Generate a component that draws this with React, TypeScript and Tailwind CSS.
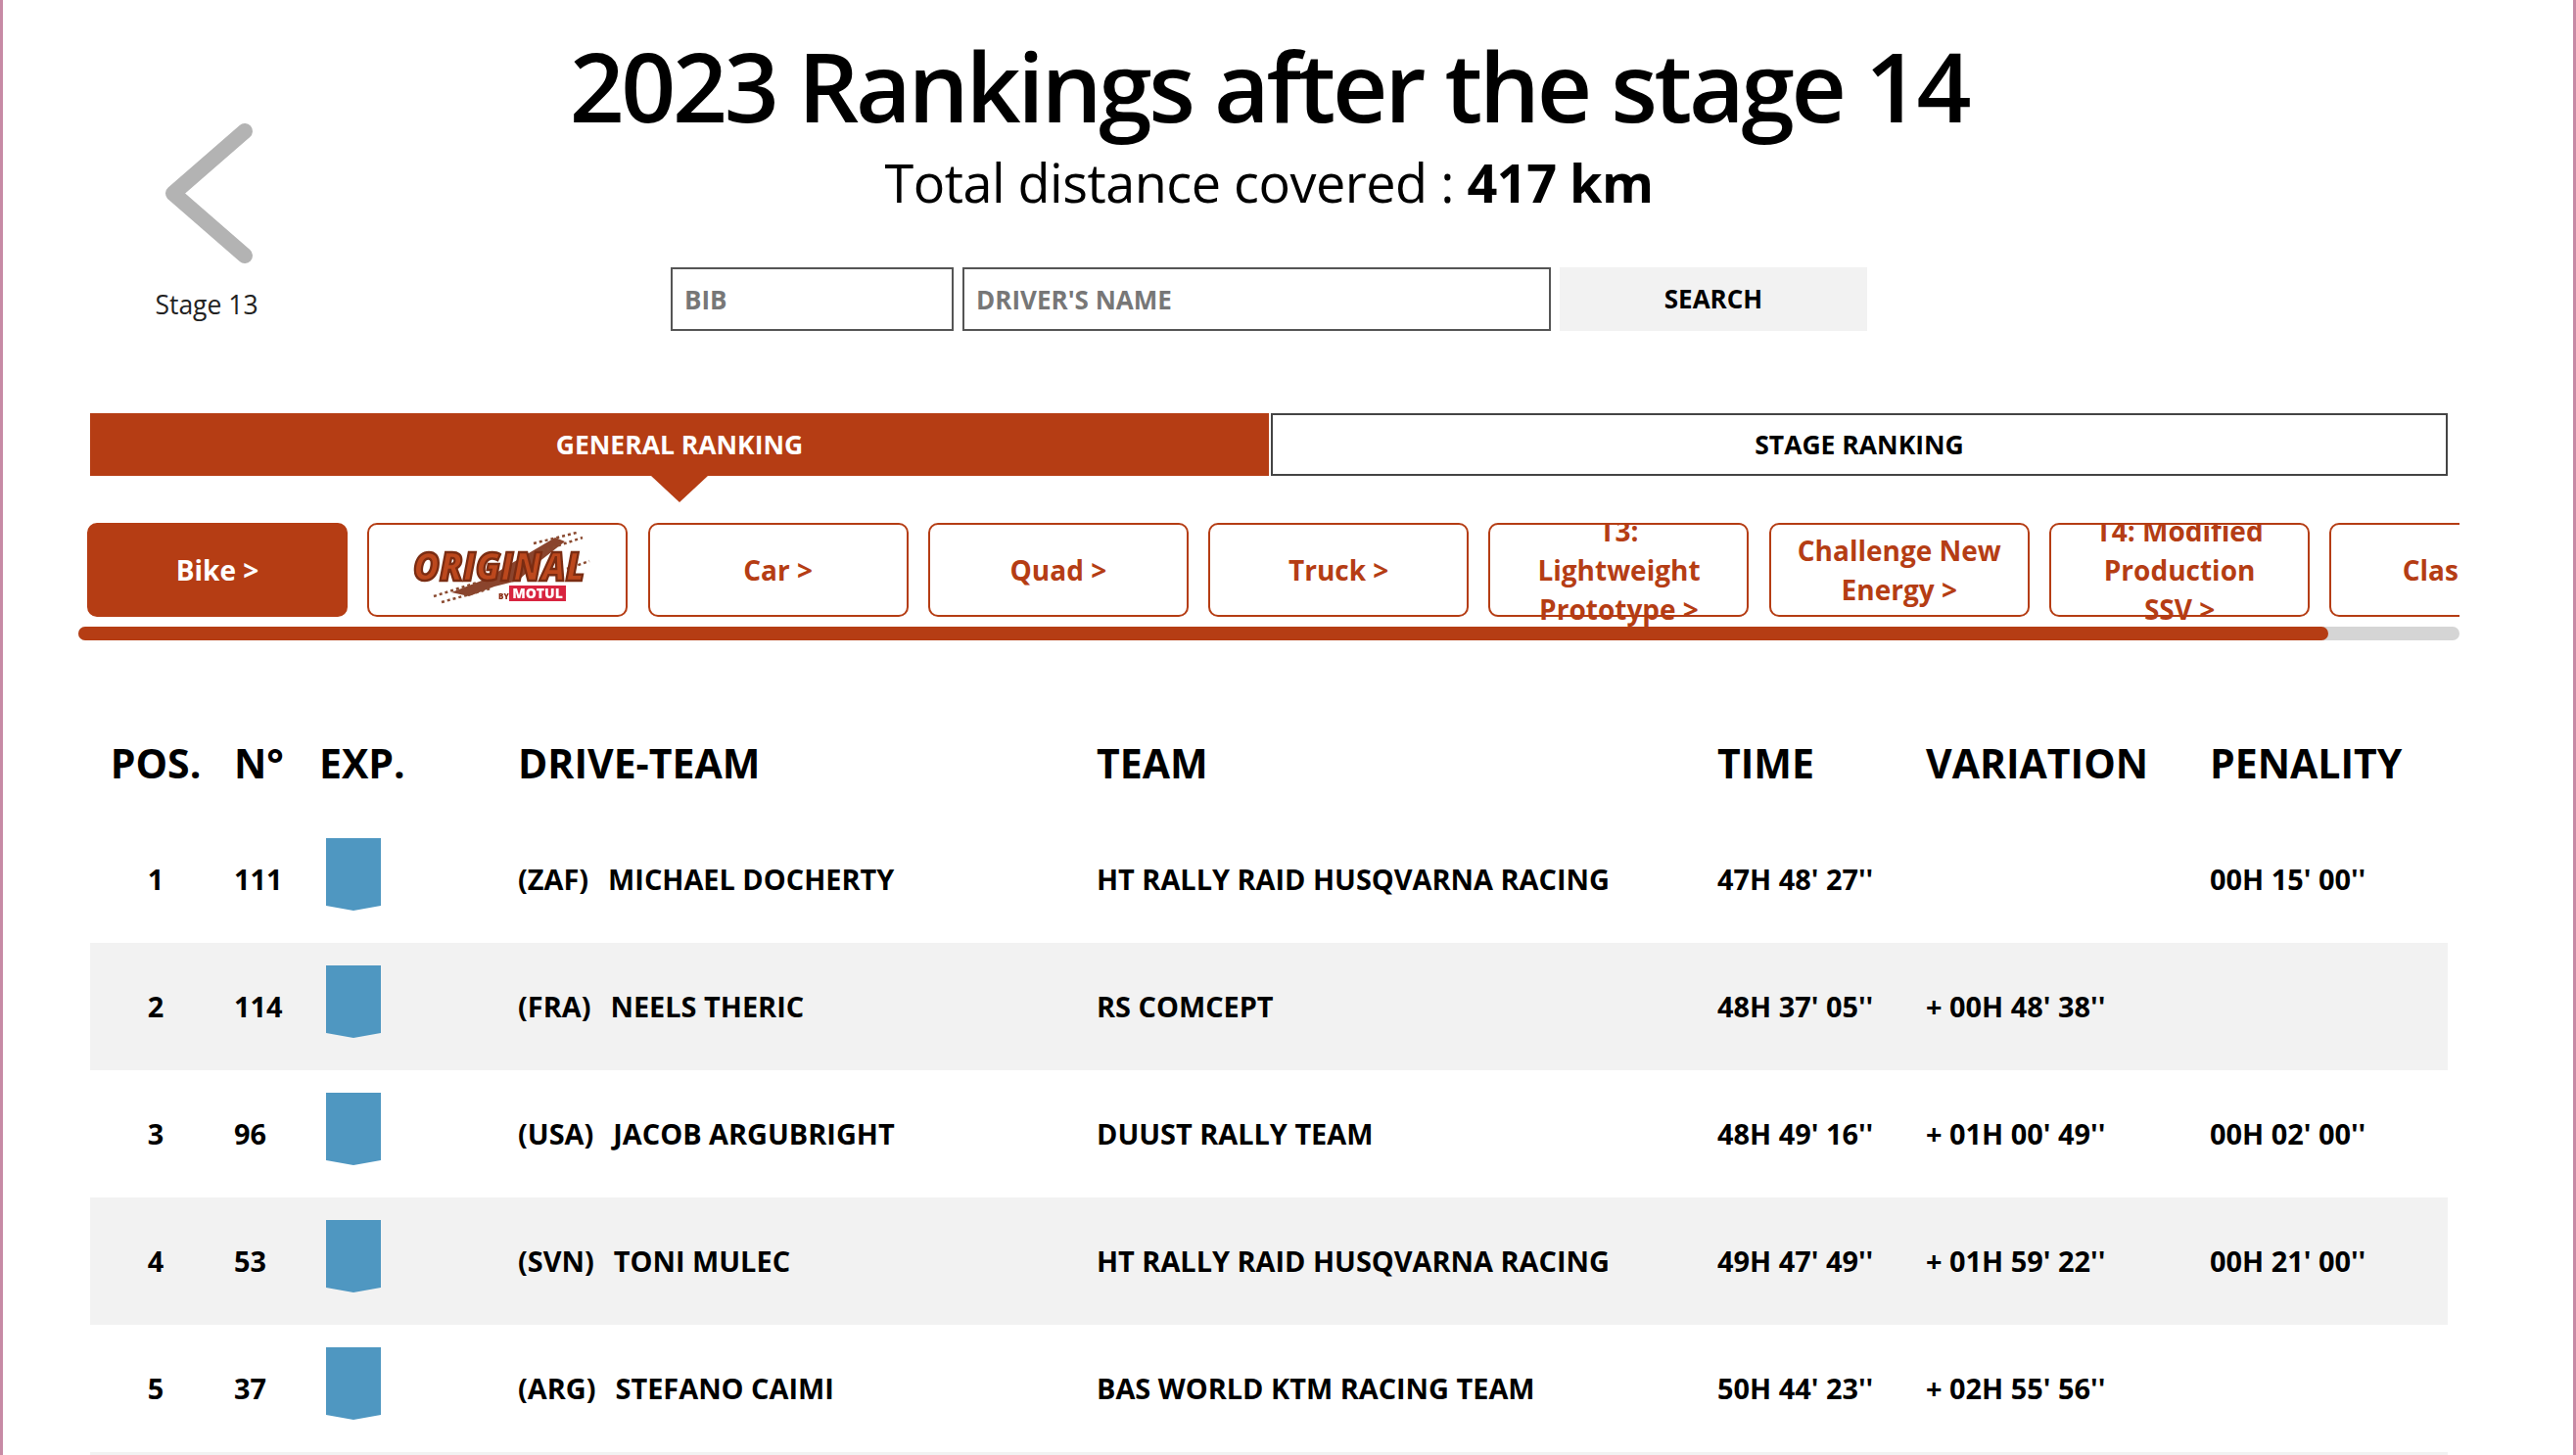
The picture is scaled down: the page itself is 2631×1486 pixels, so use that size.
const categories = [
  { label: 'Bike >', active: true },
  { label: 'logo' },
  { label: 'Car >' },
  { label: 'Quad >' },
  { label: 'Truck >' },
  { label: 'T3: Lightweight Prototype >' },
  { label: 'Challenge New Energy >' },
  { label: 'T4: Modified Production SSV\u00a0>' },
  { label: 'Classic >' },
];

const rows = [
  { pos: 1, bib: 111, country: '(ZAF)', driver: 'MICHAEL DOCHERTY', team: 'HT RALLY RAID HUSQVARNA RACING', time: "47H 48' 27''", variation: '', penalty: "00H 15' 00''" },
  { pos: 2, bib: 114, country: '(FRA)', driver: 'NEELS THERIC', team: 'RS COMCEPT', time: "48H 37' 05''", variation: "+ 00H 48' 38''", penalty: '' },
  { pos: 3, bib: 96, country: '(USA)', driver: 'JACOB ARGUBRIGHT', team: 'DUUST RALLY TEAM', time: "48H 49' 16''", variation: "+ 01H 00' 49''", penalty: "00H 02' 00''" },
  { pos: 4, bib: 53, country: '(SVN)', driver: 'TONI MULEC', team: 'HT RALLY RAID HUSQVARNA RACING', time: "49H 47' 49''", variation: "+ 01H 59' 22''", penalty: "00H 21' 00''" },
  { pos: 5, bib: 37, country: '(ARG)', driver: 'STEFANO CAIMI', team: 'BAS WORLD KTM RACING TEAM', time: "50H 44' 23''", variation: "+ 02H 55' 56''", penalty: '' },
];

function OriginalLogo() {
  return (
    <svg viewBox="0 0 190 78" className="w-[190px] h-[78px] shrink-0 blur-[0.6px]">
      <path d="M48 62 L84 48 L110 32 L154 6 L164 10 L136 32 L116 50 L92 56 L66 66 Z" fill="#7d3016" opacity="0.9" />
      <path d="M132 12 L176 1 M140 20 L182 6 M30 66 L74 52 M38 72 L88 58 M166 38 L189 30" stroke="#8a4a30" strokeWidth="2.5" strokeDasharray="3 3" fill="none" />
      <text x="9" y="50" fontFamily="'Open Sans', sans-serif" fontWeight="800" fontSize="40" fontStyle="italic" textLength="175" lengthAdjust="spacingAndGlyphs" fill="#bc481d" stroke="#7a2c12" strokeWidth="2.5">ORIGINAL</text>
      <rect x="107" y="55" width="58" height="16" fill="#d8243f" />
      <text x="136" y="68" textAnchor="middle" fontFamily="'Open Sans', sans-serif" fontWeight="800" fontSize="14" fill="#ffffff">MOTUL</text>
      <text x="96" y="69" fontFamily="'Open Sans', sans-serif" fontWeight="800" fontSize="8" fill="#8a2a12">BY</text>
    </svg>
  );
}

function Flag() {
  return (
    <svg viewBox="0 0 56 74" className="w-14 h-[74px] block">
      <path d="M0 0 H56 V69 L28 74 L0 69 Z" fill="#4f97c1" />
    </svg>
  );
}

export default function App() {
  return (
    <div className="h-[1486px] overflow-hidden bg-white border-x-[3px] border-[#c78aa5] font-['Open_Sans',sans-serif] text-black">
      <div className="pl-[89px] pr-[128px]">
        <header className="flex items-start pt-[32px]">
          <a className="w-[238px] shrink-0 flex flex-col items-center pt-[94px] text-[26.5px] text-[#222]">
            <svg viewBox="0 0 100 143" className="w-[100px] h-[143px]">
              <path d="M89 8 L16 71.5 L89 135" fill="none" stroke="#b3b3b3" strokeWidth="16" strokeLinecap="round" strokeLinejoin="round" />
            </svg>
            <span className="mt-[24px] leading-9">Stage 13</span>
          </a>
          <div className="flex-1 flex flex-col items-center">
            <h1 className="text-[98px] leading-[110px] font-semibold tracking-[-3.3px] whitespace-nowrap">2023 Rankings after the stage 14</h1>
            <p className="mt-[9px] text-[54px] leading-[70px] tracking-[-0.5px] whitespace-nowrap">
              Total distance covered : <span className="font-bold">417 km</span>
            </p>
            <form className="mt-[52px] flex gap-[9px]">
              <input placeholder="BIB" className="w-[289px] h-[65px] border-2 border-[#555] px-3 text-[26px] font-bold placeholder:text-[#777]" />
              <input placeholder="DRIVER'S NAME" className="w-[601px] h-[65px] border-2 border-[#555] px-3 text-[26px] font-bold placeholder:text-[#777]" />
              <button type="button" className="w-[314px] h-[65px] bg-[#f2f2f2] text-[26px] font-bold">SEARCH</button>
            </form>
          </div>
          <div className="w-[238px] shrink-0" />
        </header>

        <div className="mt-[84px] flex gap-[2px] relative">
          <button className="w-[1204px] h-[64px] pt-px bg-[#b53d14] text-white text-[26.5px] font-bold relative">
            GENERAL RANKING
            <span className="absolute left-1/2 -translate-x-1/2 top-full border-x-[29px] border-t-[27px] border-x-transparent border-t-[#b53d14]" />
          </button>
          <button className="flex-1 h-[64px] pt-px border-2 border-[#444] text-[26.5px] font-bold">STAGE RANKING</button>
        </div>

        <div className="-mx-3 mt-[48px]">
          <div className="overflow-hidden h-[106px]">
            <div className="flex gap-[20.3px] pl-[9px] w-max">
              {categories.map((c) => (
                <div
                  key={c.label}
                  className={`w-[266px] h-[96px] shrink-0 rounded-[10px] border-2 border-[#b53d14] flex items-center justify-center text-center px-[25px] text-[28px] leading-[40px] font-bold ${c.active ? 'bg-[#b53d14] text-white' : 'text-[#b53d14]'}`}
                >
                  {c.label === 'logo' ? <OriginalLogo /> : c.label}
                </div>
              ))}
            </div>
          </div>
          <div className="h-[14px] rounded-full bg-[#d5d5d5]">
            <div className="h-full w-[94.5%] rounded-full bg-[#b53d14]" />
          </div>
        </div>

        <table className="mt-[87px] w-full table-fixed border-collapse">
          <colgroup>
            <col className="w-[134px]" />
            <col className="w-[87px]" />
            <col className="w-[203px]" />
            <col className="w-[591px]" />
            <col className="w-[634px]" />
            <col className="w-[213px]" />
            <col className="w-[290px]" />
            <col className="w-[256px]" />
          </colgroup>
          <thead>
            <tr className="h-[92px] text-[41px] text-left align-top">
              <th className="text-center font-bold pt-[8px]">POS.</th>
              <th className="pl-[13px] font-bold pt-[8px]">N°</th>
              <th className="pl-[13px] font-bold pt-[8px]">EXP.</th>
              <th className="pl-[13px] font-bold pt-[8px]">DRIVE-TEAM</th>
              <th className="pl-[13px] font-bold pt-[8px]">TEAM</th>
              <th className="pl-[13px] font-bold pt-[8px]">TIME</th>
              <th className="pl-[13px] font-bold pt-[8px]">VARIATION</th>
              <th className="pl-[13px] font-bold pt-[8px]">PENALITY</th>
            </tr>
          </thead>
          <tbody className="text-[28.9px] font-bold">
            {rows.map((r) => (
              <tr key={r.pos} className={`h-[130px] ${r.pos % 2 === 0 ? 'bg-[#f2f2f2]' : ''}`}>
                <td className="text-center">{r.pos}</td>
                <td className="pl-[13px]">{r.bib}</td>
                <td className="pl-[20px] align-top pt-[23px]"><Flag /></td>
                <td className="pl-[13px]"><span className="mr-5">{r.country}</span>{r.driver}</td>
                <td className="pl-[13px]">{r.team}</td>
                <td className="pl-[13px]">{r.time}</td>
                <td className="pl-[13px]">{r.variation}</td>
                <td className="pl-[13px]">{r.penalty}</td>
              </tr>
            ))}
            <tr className="h-[130px] bg-[#f2f2f2]"><td colSpan={8} /></tr>
          </tbody>
        </table>
      </div>
    </div>
  );
}
